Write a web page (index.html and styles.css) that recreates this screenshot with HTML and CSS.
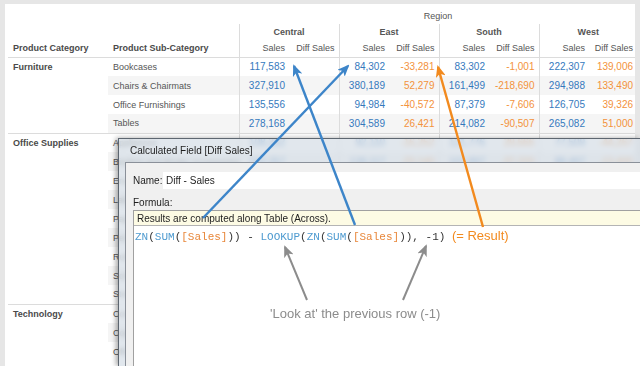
FILE: index.html
```html
<!doctype html>
<html lang="en">
<head>
	<meta charset="UTF-8" />
	<title>Diff Sales</title>
<link rel="stylesheet" href="styles.css">
</head>
<body>
	<section class="page">
		<table class="crosstab">
			<colgroup>
				<col class="c-cat"><col class="c-sub">
				<col class="c-num"><col class="c-num">
				<col class="c-num"><col class="c-num">
				<col class="c-num"><col class="c-num">
				<col class="c-num"><col class="c-last">
			</colgroup>
			<thead>
				<tr class="h-region">
					<th></th><th></th>
					<th colspan="8" class="region">Region</th>
				</tr>
				<tr class="h-group">
					<th></th><th></th>
					<th colspan="2" class="grp">Central</th>
					<th colspan="2" class="grp">East</th>
					<th colspan="2" class="grp">South</th>
					<th colspan="2" class="grp">West</th>
				</tr>
				<tr class="h-measure">
					<th class="dim">Product Category</th>
					<th class="dim">Product Sub-Category</th>
					<th class="m gs">Sales</th><th class="m">Diff Sales</th>
					<th class="m gs">Sales</th><th class="m">Diff Sales</th>
					<th class="m gs">Sales</th><th class="m">Diff Sales</th>
					<th class="m gs">Sales</th><th class="m">Diff Sales</th>
				</tr>
			</thead>
			<tbody class="cat">
				<tr>
					<td class="cat-name">Furniture</td><td class="sub">Bookcases</td>
					<td class="s gs">117,583</td><td class="d"></td>
					<td class="s gs">84,302</td><td class="d">-33,281</td>
					<td class="s gs">83,302</td><td class="d">-1,001</td>
					<td class="s gs">222,307</td><td class="d">139,006</td>
				</tr>
				<tr class="alt">
					<td></td><td class="sub">Chairs &amp; Chairmats</td>
					<td class="s gs">327,910</td><td class="d"></td>
					<td class="s gs">380,189</td><td class="d">52,279</td>
					<td class="s gs">161,499</td><td class="d">-218,690</td>
					<td class="s gs">294,988</td><td class="d">133,490</td>
				</tr>
				<tr>
					<td></td><td class="sub">Office Furnishings</td>
					<td class="s gs">135,556</td><td class="d"></td>
					<td class="s gs">94,984</td><td class="d">-40,572</td>
					<td class="s gs">87,379</td><td class="d">-7,606</td>
					<td class="s gs">126,705</td><td class="d">39,326</td>
				</tr>
				<tr class="alt">
					<td></td><td class="sub">Tables</td>
					<td class="s gs">278,168</td><td class="d"></td>
					<td class="s gs">304,589</td><td class="d">26,421</td>
					<td class="s gs">214,082</td><td class="d">-90,507</td>
					<td class="s gs">265,082</td><td class="d">51,000</td>
				</tr>
			</tbody>
			<tbody class="cat">
				<tr>
					<td class="cat-name">Office Supplies</td><td class="sub">Appliances</td>
					<td class="s gs">108,362</td><td class="d"></td>
					<td class="s gs">92,110</td><td class="d">-16,252</td>
					<td class="s gs">121,776</td><td class="d">29,666</td>
					<td class="s gs">77,509</td><td class="d">-44,267</td>
				</tr>
				<tr class="alt">
					<td></td><td class="sub">Binders and Binder Accessories</td>
					<td class="s gs">162,257</td><td class="d"></td>
					<td class="s gs">139,117</td><td class="d">-23,140</td>
					<td class="s gs">101,897</td><td class="d">-37,220</td>
					<td class="s gs">88,497</td><td class="d">-13,400</td>
				</tr>
				<tr>
					<td></td><td class="sub">Envelopes</td>
					<td class="s gs">31,506</td><td class="d"></td>
					<td class="s gs">29,840</td><td class="d">-1,666</td>
					<td class="s gs">20,163</td><td class="d">-9,677</td>
					<td class="s gs">27,415</td><td class="d">7,252</td>
				</tr>
				<tr class="alt">
					<td></td><td class="sub">Labels</td>
					<td class="s gs">7,214</td><td class="d"></td>
					<td class="s gs">6,993</td><td class="d">-221</td>
					<td class="s gs">4,870</td><td class="d">-2,123</td>
					<td class="s gs">6,108</td><td class="d">1,238</td>
				</tr>
				<tr>
					<td></td><td class="sub">Paper</td>
					<td class="s gs">58,130</td><td class="d"></td>
					<td class="s gs">49,702</td><td class="d">-8,428</td>
					<td class="s gs">41,356</td><td class="d">-8,346</td>
					<td class="s gs">53,901</td><td class="d">12,545</td>
				</tr>
				<tr class="alt">
					<td></td><td class="sub">Pens &amp; Art Supplies</td>
					<td class="s gs">22,771</td><td class="d"></td>
					<td class="s gs">19,508</td><td class="d">-3,263</td>
					<td class="s gs">15,904</td><td class="d">-3,604</td>
					<td class="s gs">20,366</td><td class="d">4,462</td>
				</tr>
				<tr>
					<td></td><td class="sub">Rubber Bands</td>
					<td class="s gs">3,412</td><td class="d"></td>
					<td class="s gs">2,980</td><td class="d">-432</td>
					<td class="s gs">2,101</td><td class="d">-879</td>
					<td class="s gs">2,655</td><td class="d">554</td>
				</tr>
				<tr class="alt">
					<td></td><td class="sub">Scissors, Rulers and Trimmers</td>
					<td class="s gs">12,640</td><td class="d"></td>
					<td class="s gs">10,988</td><td class="d">-1,652</td>
					<td class="s gs">8,437</td><td class="d">-2,551</td>
					<td class="s gs">11,205</td><td class="d">2,768</td>
				</tr>
				<tr>
					<td></td><td class="sub">Storage &amp; Organization</td>
					<td class="s gs">141,309</td><td class="d"></td>
					<td class="s gs">127,754</td><td class="d">-13,555</td>
					<td class="s gs">98,613</td><td class="d">-29,141</td>
					<td class="s gs">133,026</td><td class="d">34,413</td>
				</tr>
			</tbody>
			<tbody class="cat last">
				<tr>
					<td class="cat-name">Technology</td><td class="sub">Computer Peripherals</td>
					<td class="s gs">171,440</td><td class="d"></td>
					<td class="s gs">160,215</td><td class="d">-11,225</td>
					<td class="s gs">118,903</td><td class="d">-41,312</td>
					<td class="s gs">149,577</td><td class="d">30,674</td>
				</tr>
				<tr class="alt">
					<td></td><td class="sub">Copiers and Fax</td>
					<td class="s gs">160,011</td><td class="d"></td>
					<td class="s gs">174,620</td><td class="d">14,609</td>
					<td class="s gs">120,048</td><td class="d">-54,572</td>
					<td class="s gs">151,990</td><td class="d">31,942</td>
				</tr>
				<tr>
					<td></td><td class="sub">Office Machines</td>
					<td class="s gs">301,876</td><td class="d"></td>
					<td class="s gs">355,238</td><td class="d">53,362</td>
					<td class="s gs">252,117</td><td class="d">-103,121</td>
					<td class="s gs">289,410</td><td class="d">37,293</td>
				</tr>
			</tbody>
		</table>
	</section>

	<div class="dialog">
		<div class="dialog-title">Calculated Field [Diff Sales]</div>
		<div class="dialog-body">
			<div class="name-row">
				<span class="name-label">Name:</span>
				<div class="name-input">Diff - Sales</div>
			</div>
			<div class="formula-label">Formula:</div>
			<div class="formula-box">
				<div class="formula-hint">Results are computed along Table (Across).</div>
				<div class="formula-code"><span class="fn">ZN</span>(<span class="fn">SUM</span>(<span class="fld">[Sales]</span>)) - <span class="fn">LOOKUP</span>(<span class="fn">ZN</span>(<span class="fn">SUM</span>(<span class="fld">[Sales]</span>)), -1) <span class="result">(= Result)</span></div>
			</div>
		</div>
	</div>

	<p class="note">'Look at' the previous row (-1)</p>

	<!-- annotation arrows over the whole shot -->
	<svg class="arrows" width="640" height="366" viewBox="0 0 640 366">
		<defs>
			<marker id="head-blue" markerWidth="12" markerHeight="10" refX="10" refY="5" orient="auto" markerUnits="userSpaceOnUse">
				<path d="M0,0 L12,5 L0,10 L3,5 Z" fill="#3d85c9"/>
			</marker>
			<marker id="head-orange" markerWidth="12" markerHeight="10" refX="10" refY="5" orient="auto" markerUnits="userSpaceOnUse">
				<path d="M0,0 L12,5 L0,10 L3,5 Z" fill="#f28a1e"/>
			</marker>
			<marker id="head-gray" markerWidth="12" markerHeight="10" refX="10" refY="5" orient="auto" markerUnits="userSpaceOnUse">
				<path d="M0,0 L12,5 L0,10 L3,5 Z" fill="#8c8c8c"/>
			</marker>
		</defs>
		<line x1="203" y1="218" x2="348" y2="66" stroke="#3d85c9" stroke-width="2.4" marker-end="url(#head-blue)"/>
		<line x1="355" y1="225" x2="294" y2="66" stroke="#3d85c9" stroke-width="2.4" marker-end="url(#head-blue)"/>
		<line x1="483" y1="227" x2="438" y2="67" stroke="#f28a1e" stroke-width="2.4" marker-end="url(#head-orange)"/>
		<line x1="307" y1="300" x2="285" y2="247" stroke="#8c8c8c" stroke-width="2" marker-end="url(#head-gray)"/>
		<line x1="403" y1="300" x2="426" y2="246" stroke="#8c8c8c" stroke-width="2" marker-end="url(#head-gray)"/>
	</svg>
</body>
</html>
```

FILE: styles.css
```css
*{
	margin: 0;
	padding: 0;
	box-sizing: border-box;
}
body{
	position: relative;
	width: 640px;
	height: 366px;
	overflow: hidden;
	background: #e6e6e6;
	font-family: "Liberation Sans", Arial, sans-serif;
	color: #555;
}
.page{
	margin: 4px 5px 0 5px;
	height: 362px;
	padding: 4px 0 0 3px;
	background: #fff;
	overflow: hidden;
}

/* crosstab */
.crosstab{
	border-collapse: collapse;
	table-layout: fixed;
	width: 627px;
	font-size: 9px;
}
.c-cat{ width: 100px; }
.c-sub{ width: 131px; }
.c-num{ width: 50px; }
.c-last{ width: 48px; }
.crosstab th, .crosstab td{
	white-space: nowrap;
	overflow: hidden;
	font-weight: normal;
}
.h-region th{
	height: 16px;
	text-align: center;
}
.h-group th{
	height: 16px;
}
.h-measure th{
	height: 17px;
	border-bottom: 1px solid #dcdcdc;
}
.crosstab .grp{
	font-weight: bold;
	text-align: center;
	border-left: 1px solid #dcdcdc;
}
.crosstab .dim{
	font-weight: bold;
	text-align: left;
	padding-left: 5px;
	color: #4a4a4a;
}
.m{
	text-align: right;
	padding-right: 4px;
}
.gs{
	border-left: 1px solid #dcdcdc;
}
.crosstab td{
	height: 19px;
}
tbody.cat{
	border-bottom: 1px solid #dcdcdc;
}
tbody.last{
	border-bottom: none;
}
tr.alt td:not(:first-child){
	background: #f5f5f5;
}
.crosstab .cat-name{
	font-weight: bold;
	padding-left: 5px;
	color: #4a4a4a;
}
.sub{
	padding-left: 5px;
}
.s, .d{
	font-size: 10px;
	text-align: right;
	padding-right: 4px;
}
.s{
	color: #3579bd;
}
.d{
	color: #f3923b;
}

/* calculated field window */
.dialog{
	position: absolute;
	left: 118px;
	top: 138px;
	width: 522px;
	height: 228px;
	padding-left: 6px;
	border: 1px solid #5d6670;
	border-right: none;
	border-bottom: none;
	background: rgba(214, 222, 230, 0.72);
	backdrop-filter: blur(2.5px);
	box-shadow: -2px 0 5px rgba(0, 0, 0, 0.35);
	color: #1e1e1e;
	font-size: 10px;
}
.dialog-title{
	height: 23px;
	line-height: 24px;
	padding-left: 5px;
	font-size: 10px;
}
.dialog-body{
	height: 204px;
	padding: 9px 0 0 7px;
	background: #f0f0f0;
	border: 1px solid #8a9099;
	border-right: none;
	border-bottom: none;
}
.name-row{
	display: flex;
	align-items: center;
	height: 17px;
}
.name-label{
	width: 30px;
}
.name-input{
	flex: 1;
	height: 17px;
	line-height: 17px;
	padding-left: 3px;
	background: #fff;
}
.formula-label{
	margin-top: 8px;
	height: 12px;
	line-height: 12px;
}
.formula-box{
	margin-top: 1px;
	height: 157px;
	border-top: 1px solid #a0a0a0;
	border-left: 1px solid #a0a0a0;
	background: #fff;
}
.formula-hint{
	height: 15px;
	line-height: 15px;
	padding-left: 3px;
	background: #fdfbe4;
	border-bottom: 1px solid #b4b4b4;
}
.formula-code{
	padding: 3px 0 0 1px;
	font-family: "Liberation Mono", "Courier New", monospace;
	font-size: 11px;
	line-height: 14px;
	color: #333;
	white-space: pre;
}
.fn{
	color: #4f9bd0;
}
.fld{
	color: #e8873a;
}
.result{
	font-family: "Liberation Sans", Arial, sans-serif;
	font-size: 13px;
	color: #f28a1e;
}

.note{
	position: absolute;
	left: 270px;
	top: 306px;
	font-size: 13px;
	color: #8c8c8c;
}

.arrows{
	position: absolute;
	left: 0;
	top: 0;
	pointer-events: none;
}
```
